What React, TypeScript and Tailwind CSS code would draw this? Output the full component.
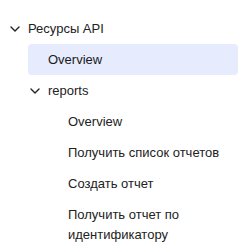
import React from 'react';

interface NavNode {
  label: string;
  active?: boolean;
  children?: NavNode[];
}

const tree: NavNode[] = [
  {
    label: 'Ресурсы API',
    children: [
      { label: 'Overview', active: true },
      {
        label: 'reports',
        children: [
          { label: 'Overview' },
          { label: 'Получить список отчетов' },
          { label: 'Создать отчет' },
          { label: 'Получить отчет по идентификатору' },
        ],
      },
    ],
  },
];

const Chevron: React.FC = () => (
  <svg width="10" height="6" viewBox="0 0 10 6" fill="none" className="ml-[2px]">
    <path d="M1 1l4 4 4-4" stroke="#222" strokeWidth="1.4" strokeLinecap="round" strokeLinejoin="round" />
  </svg>
);

const NavItem: React.FC<{ node: NavNode }> = ({ node }) => {
  const open = !!node.children;
  return (
    <li>
      <div
        className={`flex items-start rounded-[4px] pt-[6px] pb-[5px] text-[13px] leading-[20px] ${
          node.active ? 'bg-[#e6ebfd] text-[#1a1a1a]' : 'text-[#222]'
        }`}
      >
        <span className="flex h-[20px] w-5 shrink-0 items-center">{open && <Chevron />}</span>
        <span className="pr-4">{node.label}</span>
      </div>
      {node.children && (
        <ul className="ml-5">
          {node.children.map((c, i) => (
            <NavItem key={i} node={c} />
          ))}
        </ul>
      )}
    </li>
  );
};

export default function App() {
  return (
    <div className="h-[251px] w-[246px] bg-white pl-2 pr-2 pt-[13px] font-['Liberation_Sans',Arial,sans-serif]">
      <ul>
        {tree.map((n, i) => (
          <NavItem key={i} node={n} />
        ))}
      </ul>
    </div>
  );
}
